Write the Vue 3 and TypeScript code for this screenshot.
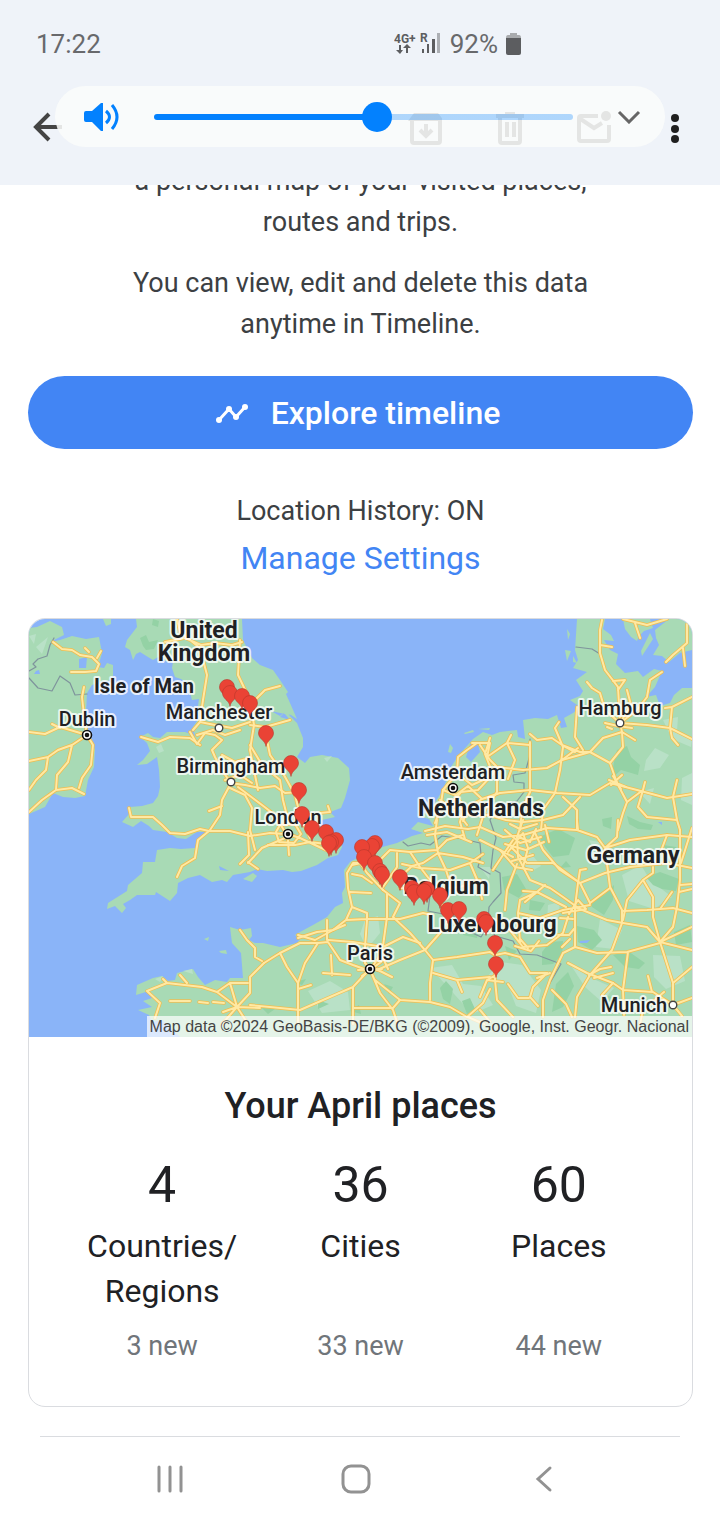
<script setup lang="ts">
import { computed, ref } from 'vue'

interface Stat { value: number; label: string; fresh: string }
interface City { name: string; x: number; y: number; kind?: 'country' | 'island' }

const volume = ref(53.5)
const trackStyle = computed(() => ({ '--level': `${volume.value}%` }))

const stats: Stat[] = [
  { value: 4, label: 'Countries/ Regions', fresh: '3 new' },
  { value: 36, label: 'Cities', fresh: '33 new' },
  { value: 60, label: 'Places', fresh: '44 new' },
]

const labels: City[] = [
  { name: 'United', x: 204, y: 638, kind: 'country' },
  { name: 'Kingdom', x: 204, y: 661, kind: 'country' },
  { name: 'Isle of Man', x: 144, y: 693, kind: 'island' },
  { name: 'Dublin', x: 87, y: 726 },
  { name: 'Manchester', x: 219, y: 719 },
  { name: 'Birmingham', x: 231, y: 773 },
  { name: 'London', x: 288, y: 824 },
  { name: 'Amsterdam', x: 453, y: 779 },
  { name: 'Netherlands', x: 481, y: 816, kind: 'country' },
  { name: 'Hamburg', x: 620, y: 715 },
  { name: 'Germany', x: 633, y: 863, kind: 'country' },
  { name: 'Belgium', x: 446, y: 894, kind: 'country' },
  { name: 'Luxembourg', x: 492, y: 932, kind: 'country' },
  { name: 'Paris', x: 370, y: 960 },
  { name: 'Munich', x: 634, y: 1012 },
]

const capitals = [[87, 735], [288, 834], [453, 788], [370, 969]]
const towns = [[219, 728], [231, 782], [620, 723], [673, 1005]]

const pins = [
  [227, 687], [230, 693], [242, 696], [250, 703], [266, 733], [291, 763], [299, 790],
  [302, 814], [312, 828], [326, 832], [336, 840], [331, 842], [329, 843], [375, 843],
  [372, 846], [362, 847], [364, 857], [375, 863], [380, 871], [382, 874], [400, 877],
  [412, 888], [414, 892], [427, 889], [424, 891], [440, 895], [448, 910], [459, 909],
  [484, 919], [486, 922], [495, 943], [496, 964],
]

const land = [
  'M29 628L37 627 50 621 62 627 64 635 50 642 60 640 72 636 86 639 99 637 102 653 98 667 104 668 107 663 113 665 113 676 108 681 100 682 92 685 87 693 86 712 87 727 95 750 94 767 88 780 85 796 75 798 63 797 53 793 45 807 29 814Z',
  'M103 619H111V624L106 626Z',
  'M136 619L137 627 127 640 125 647 130 650 133 660 136 654 140 652 148 657 153 660 160 656 165 661 173 662 172 668 175 677 181 679 187 683 190 692 192 700 199 699 197 713 199 718 193 727 195 736 185 732 167 732 160 738 153 737 148 733 140 737 147 743 150 751 143 760 137 765 147 764 157 757 159 770 160 787 158 796 153 803 142 806 130 807 130 813 122 822 133 827 141 821 149 826 153 830 167 832 177 838 186 839 197 832 206 832 200 838 195 848 181 849 170 848 157 850 155 862 143 862 142 873 128 885 127 891 108 903 107 909 115 906 122 913 126 908 123 904 130 900 137 895 155 895 156 892 170 901 177 893 178 883 188 878 200 875 212 882 222 880 227 882 233 875 250 872 257 869 267 871 283 870 292 872 301 871 317 865 328 858 338 855 342 847 340 838 328 834 319 825 322 820 335 817 330 812 341 808 345 798 350 780 349 768 338 758 322 755 310 757 305 763 297 757 303 747 303 738 297 723 288 714 283 713 291 715 297 719 290 703 286 694 288 692 280 680 273 670 260 665 252 658 243 640 242 619Z',
  'M243 879L253 873 257 876 252 882Z',
  'M180 1037L172 1029 162 1020 152 1022 149 1015 138 1010 152 1007 143 1001 152 998 149 991 136 995 137 985 153 978 162 976 168 981 175 980 177 973 193 969 198 977 205 985 215 980 227 982 230 978 243 978 241 953 232 943 230 927 240 930 251 928 252 936 249 940 255 943 263 943 280 947 297 943 300 939 295 935 300 932 313 925 327 917 335 907 343 903 342 893 345 887 344 870 350 862 361 856 375 849 397 843 412 836 423 833 411 829 418 822 433 826 429 819 419 816 430 810 443 790 451 767 458 756 467 746 473 739 483 732 492 735 500 732 517 730 518 737 525 739 523 720 535 718 548 719 557 715 561 728 567 727 564 718 573 713 580 707 570 700 580 696 583 691 576 680 587 672 573 668 578 660 575 650 577 619H605L603 629 611 635 614 641 604 640 610 650 618 654 616 664 625 673 638 671 643 677 654 669 662 671 655 687 646 697 656 695 660 706 670 703 674 695 682 688 692 688V1037Z',
  'M448 752L450 744 453 748 451 753Z',
  'M464 733L473 730 474 732 465 734ZM478 729L490 728 489 730Z',
  'M623 619H650L653 628 644 631 639 636 637 641 631 637 625 629ZM650 633L653 639 642 656 641 651ZM655 630L669 619H692V650L680 653 669 662 662 656 653 655 659 645 656 638Z',
  'M567 629L570 634 568 640ZM565 650L571 651 567 661ZM573 656L577 663 573 662Z',
  'M204 939L209 937 208 941ZM219 951L226 950 227 954 221 953Z',
]

const water = [
  'M79 659L87 657 86 668 79 668Z',
  'M36 671L39 670 40 674 34 674Z',
  'M470 744L478 744 480 752 471 762 466 757Z',
  'M219 866L229 871 220 870Z',
  'M271 711L280 716 285 712 280 717 290 720 285 714Z',
  'M658 822L662 822 662 825ZM580 941L590 940 587 943 580 943Z',
]

const forests = [
  'M140 638L146 635 149 642 158 640 154 649 146 650 143 646ZM153 619L159 621 158 627 152 625Z',
  'M617 750L627 746 631 757 640 765 638 775 621 770 611 779 614 762Z',
  'M627 816L640 822 653 825 651 830 638 829 629 824ZM602 819L612 817 611 829 603 826Z',
  'M539 837L558 829 575 838 569 855 553 857 546 848Z',
  'M646 877L660 872 679 879 676 891 662 889 653 885Z',
  'M590 901L605 894 614 885 613 900 604 915 592 907Z',
  'M577 926L594 930 602 940 592 950 578 942Z',
  'M542 952L550 942 563 941 562 955 553 964 542 965Z',
  'M556 984L568 972 574 986 563 1007 552 1012Z',
  'M613 955L628 951 645 963 639 969 625 967Z',
  'M502 877L517 874 526 889 519 898 504 890Z',
  'M674 932L690 925 692 942 676 945Z',
  'M465 922L480 925 477 938 463 935ZM505 946L517 951 509 960Z',
  'M440 988L446 981 453 989 450 1004 443 999ZM462 1001L470 998 475 1009 467 1014Z',
  'M350 1011L359 1005 361 1014ZM384 984L393 987 389 994ZM318 1000L329 1004 318 1009Z',
  'M294 982L306 979 302 985ZM262 1008L275 1009 268 1014ZM600 995L620 998 614 1010 601 1006Z',
  'M560 868L566 861 571 867ZM663 845L676 847 680 856 669 854ZM530 900L545 903 540 911 529 910Z',
]

const meadows = [
  'M365 920L378 916 380 933 367 949 360 934ZM308 991L330 981 348 992 350 1010 322 1013Z',
  'M430 968L452 965 463 984 481 986 493 1005 472 1014 446 985Z',
  'M500 962L522 965 541 990 536 1013 516 1006 507 983 488 976Z',
  'M622 875L641 865 650 880 672 897 654 909 629 901Z',
  'M600 919L622 930 614 949 596 947Z',
  'M570 964L589 977 614 988 602 1002 585 987ZM653 955L680 956 685 981 666 989 654 977Z',
  'M663 720L678 717 677 731 692 739 691 747 672 739ZM655 748L669 755 660 768 644 771 646 760Z',
  'M682 778L692 773V805L681 800ZM639 792L654 788 650 804ZM548 905L560 902 557 932 546 936Z',
  'M29 636L36 634 34 644ZM36 647L48 637 42 654ZM172 624L181 626 178 636ZM156 747L161 744 164 751 159 753Z',
  'M324 758L332 756 327 762ZM183 971L192 969 193 974ZM155 979L163 976 160 982Z',
  'M589 840L603 843 594 850ZM520 859L530 852 541 866 530 872ZM480 867L491 867 489 879Z',
]

const borders = [
  'M54 638L50 645 47 656 38 659 33 664 36 667 29 671',
  'M29 678L38 688 52 691 60 676 70 683 75 695 87 694',
  'M576 647L592 649 600 654',
  'M530 739L530 755 525 773 513 775 514 782 524 783 524 792 517 801 497 807 490 820 496 838 493 850 491 868 500 873 501 893 493 902 489 907 488 922 495 936 513 941 520 954 537 955 561 964 550 983 543 997 542 1016',
  'M403 842L408 846 421 843 430 845 442 836 463 839 480 843 481 855 478 867 490 874',
  'M430 895L428 911 443 914 451 913 466 930 481 937 489 925',
]

const roads = [
  'M53 642L62 649 72 650 80 655 92 657 99 664 96 671 85 672 71 672M101 651L97 658M85 648L89 652',
  'M84 687L82 697 84 715 87 735M29 732L45 734 60 727 87 735M52 724L60 728',
  'M87 735L72 745 58 750 48 757 29 761M87 735L93 745 91 765 82 778 79 788M72 745L68 762 57 775 56 790 72 788 84 794M48 757L46 770 36 780 29 790M56 790L42 800 29 812',
  'M141 737L158 742 170 737 190 738 200 745M165 642L185 638 201 645 215 643 232 645 242 642M177 619L180 632 200 648 207 675 203 700 200 722M240 640L238 675 250 700 254 725 250 750 258 790',
  'M193 730L200 722 215 725 232 728 250 722M190 732L197 744 205 733 215 735 222 740 212 750 215 757 222 770 230 782M197 735L213 730 225 735 240 730M250 725L265 727 290 720M255 700L265 690 280 686M266 735L270 755 284 775 295 795 300 815M250 745L262 765 280 780 283 800 288 820',
  'M222 755L235 762 250 758M230 785L222 800 220 815 210 830M222 806L209 811M230 788L245 795 252 808 250 830 255 850M230 783L245 785 260 788 275 786 285 793 299 792M238 787L262 805 275 815 285 832M225 780L240 775 252 783',
  'M129 808L131 817 153 817 162 825 170 833 185 834 200 829 209 831 230 831 250 836 270 833 285 834M209 831L198 840 195 858 182 866 177 877M248 832L249 855 240 864M248 863L262 848 285 838M248 862L258 869',
  'M288 834L300 838 315 845 330 852M288 840L289 855M268 845L295 845 310 842 326 844M302 820L310 838M320 813L330 812 328 806M276 832L280 825 295 824 301 834 294 843 279 842Z',
  'M240 930L247 940 255 948 255 957 262 961M264 963L250 977 250 993 237 1007M248 983L230 983 217 992 202 987 167 983 147 991 160 1003 155 1018M217 992L237 1007 230 983M260 1008L237 1007 223 1012M237 1007L222 1024M237 1007L248 1024M180 975L187 983M163 979L167 983M170 1001L190 1001M199 1002L208 1003M213 1002L224 1003',
  'M383 890L367 873 360 863 353 863 347 873 348 888 352 907 346 920 333 930 317 932 298 938M352 865L361 863M352 874L362 876 372 883M350 892L371 893M352 907L367 913 367 920 365 947 365 963 370 969M346 920L367 919 400 919 423 913 432 915',
  'M387 893L387 917 382 953 372 967M383 890L400 903 393 917 410 933 425 950 433 960 430 983 430 1000M264 963L280 953 300 943 318 943 328 942 340 960 353 965 367 970M298 935L315 940 333 930 345 925M327 920L327 940M280 953L287 967 298 983 298 1024M318 943L305 963 298 983M298 989L311 985',
  'M250 1005L270 1007 300 1010 323 1000 353 987 367 972M353 987L353 1024M372 974L380 993 393 1010 398 1025M375 980L400 1000 430 1002 450 1007 467 1017 483 1003 490 989M377 970L400 960 425 950 440 933 449 918',
  'M433 960L457 957 490 952 495 955 505 953 520 957 530 973 547 973M433 973L457 980 490 977M328 940L353 942 383 947 403 937 420 943M323 973L350 975M353 1008L393 1008 400 1000M331 955L332 975M383 958L388 969M376 969L392 977M457 980L462 992M358 970L382 969M362 976L381 962',
  'M380 860L390 850 410 852 437 850 447 840 463 835M397 853L397 867 383 887M400 877L412 866 423 863 438 853 463 857 483 863M410 852L420 867 430 880 437 897 450 917M400 888L418 889 440 889 460 887 480 880M402 864L420 868 450 870 470 863 483 854M437 820L435 835 438 853 446 870 452 889M470 863L478 882 482 899',
  'M477 743L467 750 458 757 457 773 443 790 440 810 435 823M472 743L490 743 487 757 507 743 530 745M480 745L490 760 497 767 523 770 547 768 562 760 590 752 610 763 617 783 627 802 623 813 618 830M490 738L485 754 493 774 478 790 461 792 450 805M457 773L472 785 490 777 497 767M497 767L497 792 485 810 477 835M511 735L507 743 515 760 508 779',
  'M443 790L456 795 468 786 482 799 500 793 530 790 557 793 590 795 610 783 637 790 667 798 692 794M440 809L457 806 470 815 489 815 506 820 523 822 543 820 563 815 580 797M440 800L457 812 467 825M455 795L464 806 460 822 465 839M425 831L445 826 468 829 480 827M427 835L447 832 471 842M482 799L470 806 463 821',
  'M530 734L537 740 552 738 562 745 580 752 590 752 603 738 622 732 635 740M559 722L555 728 563 747 560 770 555 793 543 810 541 830M577 707L575 737 583 750M562 745L575 752M562 760L578 748M622 732L623 747 610 763M530 742L530 770 530 792 522 810 520 830',
  'M602 620L600 630 600 653 605 670 618 687 620 723M613 681L625 680 618 690M600 645L612 647M587 682L592 688 600 693 605 710 620 723M627 690L631 705 620 723M662 672L650 680 647 697 637 710 620 723 622 732M605 723L618 726 632 728M620 723L647 725 670 728 692 739M670 728L672 707 692 697M665 708L672 707M670 728L672 738 678 745M607 727L612 729',
  'M623 619L647 625 667 619M635 623L640 638M687 624L687 643 673 655 666 662M683 648L685 666M563 797L577 810 577 830M645 782L643 790 638 807 647 817 677 820 673 797 677 780M677 820L680 830M643 790L627 802M611 785L622 775M613 776L621 789M609 780L626 787',
  'M480 827L503 837 523 835 547 828 577 830 597 837 605 848 630 840 667 835 692 837M618 820L617 837 605 848M577 820L578 830M523 820L517 837 518 857 530 880 550 888 563 897 577 907M480 840L500 850 513 857M493 870L513 840M528 863L553 863 580 883 590 903M535 833L543 850 560 870 580 883',
  'M505 830L520 843 541 837M505 844L526 850 544 842M508 852L523 833 528 848 523 867M512 861L533 855M517 836L530 842 536 829M545 825L549 842M510 824L520 829 537 824M500 850L515 867 532 870M511 847L527 863',
  'M580 870L578 883 575 907M580 870L586 869M580 883L605 873 630 867 667 863 692 868M605 848L610 887 622 910 622 923 612 950 590 975 577 997 575 1017M590 903L610 888M575 907L607 920 623 923 647 927 660 942 673 983 673 1005M692 927L660 942 692 950M622 911L647 910 673 908 692 913',
  'M653 867L653 873 643 880 653 897 653 917 660 942M643 880L627 900 623 920M680 830L680 863 680 880 677 907 673 927 660 942M667 835L658 859M692 828L681 863M679 892L692 889M680 885L692 884M660 909L672 892',
  'M575 907L575 947 563 953 550 980 543 1000 543 1017M575 947L597 953 627 952 660 943M568 963L587 973 613 983 623 990 653 992 673 1005 692 998M628 952L623 990 624 1015M673 983L692 967M673 1005L682 1016M664 992L650 1004M589 975L600 969 611 967M594 978L613 973M648 976L652 992',
  'M502 920L523 947 547 945 563 933 568 917M518 913L540 918 563 910 590 905M518 913L520 943M537 892L520 900 518 913M537 892L566 907M505 910L507 890 517 864M515 946L531 951 539 941M520 939L528 948M563 913L586 909 578 900 569 914M558 935L569 935 574 929M562 947L570 939M560 918L573 919M523 891L537 892 545 885M525 902L537 892',
  'M495 980L497 1000 513 1017M487 980L503 982M495 955L495 980M480 997L487 980 494 976M508 984L518 998 529 998M552 990L566 1004 572 1017M547 973L533 987 530 997 538 1006M537 978L550 973M480 1010L490 1022M613 983L602 995M468 1017L484 1024M643 1010L640 1024',
]
</script>

<template>
  <div class="screen">
    <header class="top">
      <div class="status">
        <time>17:22</time>
        <div class="indicators">
          <svg class="signal" viewBox="0 0 48 28" aria-label="4G+ roaming signal">
            <g fill="#5c5d60">
              <text x="0" y="13">4G+</text>
              <text x="26" y="12">R</text>
              <path d="M5 15H7V20H9L6 24 2 20H5ZM14 23H12V18H9L13 14 17 18H14Z" />
              <path d="M28 19H30V23H28ZM33 14H35V23H33ZM38 9H41V23H38Z" />
              <path d="M43 3H46V23H43Z" opacity=".45" />
            </g>
          </svg>
          <span>92%</span>
          <svg class="battery" viewBox="0 0 15 22" aria-hidden="true">
            <path fill="#a9abae" d="M4 0H11V2H13Q15 2 15 5H0Q0 2 2 2H4Z" />
            <path fill="#5c5d60" d="M0 5H15V20Q15 22 13 22H2Q0 22 0 20Z" />
          </svg>
        </div>
      </div>
      <div class="toolbar">
        <button class="back" type="button" aria-label="Back">
          <svg viewBox="0 0 48 48"><path d="M42 23H17M29 10L16 23 29 36" /></svg>
        </button>
        <button type="button" aria-label="Archive">
          <svg viewBox="0 0 48 48"><path d="M10 15V37Q10 39 12 39H36Q38 39 38 37V15L35 11H13L10 15H38M24 20V31M18 26L24 32 30 26" /></svg>
        </button>
        <button type="button" aria-label="Delete">
          <svg viewBox="0 0 48 48"><path d="M10 12H38M19 10H29M14 13V37Q14 39 16 39H32Q34 39 34 37V13M21 18V33M28 18V33" /></svg>
        </button>
        <button type="button" aria-label="Mark as unread">
          <svg viewBox="0 0 48 48">
            <path d="M28 12H11Q9 12 9 14V35Q9 37 11 37H37Q39 37 39 35V21M9 14L24 24 32 19" />
            <circle class="solid" cx="36" cy="12" r="5" />
          </svg>
        </button>
        <button type="button" aria-label="More options">
          <svg viewBox="0 0 48 48"><g class="dots"><circle cx="21" cy="14" r="4" /><circle cx="21" cy="25" r="4" /><circle cx="21" cy="35" r="4" /></g></svg>
        </button>
      </div>
      <div class="volume">
        <svg class="speaker" viewBox="0 0 36 30" aria-hidden="true">
          <path fill="#0381fe" d="M2 9H8L17 1H19V29H17L8 20H2Q0 20 0 18V11Q0 9 2 9Z" />
          <path fill="none" stroke="#0381fe" stroke-width="3" d="M22 9Q29 15 22 21M28 3Q38 15 28 27" />
        </svg>
        <input v-model.number="volume" :style="trackStyle" type="range" min="0" max="100" step="0.5" aria-label="Media volume">
        <button type="button" aria-label="Expand volume panel">
          <svg viewBox="0 0 24 14"><path d="M2 2L12 12 22 2" /></svg>
        </button>
      </div>
    </header>

    <main>
      <p class="intro">a personal map of your visited places,<br>routes and trips.</p>
      <p class="intro note">You can view, edit and delete this data<br>anytime in Timeline.</p>
      <button class="explore" type="button">
        <svg viewBox="0 0 34 22" aria-hidden="true">
          <path fill="none" stroke="#fff" stroke-width="3" d="M4 18L14 7 21 15 30 5" />
          <g fill="#fff"><circle cx="4" cy="18" r="3" /><circle cx="14" cy="7" r="3" /><circle cx="21" cy="15" r="3" /><circle cx="30" cy="5" r="3" /></g>
        </svg>
        Explore timeline
      </button>
      <p class="history">Location History: ON</p>
      <a class="manage" href="#settings">Manage Settings</a>

      <section class="card">
        <div class="map">
          <svg viewBox="29 619 663 418" role="img" aria-label="Map of visited places">
            <path fill="#8ab4f8" d="M29 619H692V1037H29Z" />
            <path v-for="d in land" :key="d" :d="d" fill="#a8dab5" />
            <path v-for="d in meadows" :key="d" :d="d" fill="#b9e1c7" />
            <path v-for="d in forests" :key="d" :d="d" fill="#94d2a5" />
            <path v-for="d in water" :key="d" :d="d" fill="#8ab4f8" />
            <g class="border"><path v-for="d in borders" :key="d" :d="d" /></g>
            <g class="casing"><path v-for="d in roads" :key="d" :d="d" /></g>
            <g class="road"><path v-for="d in roads" :key="d" :d="d" /></g>
            <g v-for="[x, y] in capitals" :key="`${x}-${y}`">
              <circle :cx="x" :cy="y" r="4.5" fill="#fff" stroke="#111" stroke-width="1.6" />
              <circle :cx="x" :cy="y" r="2.3" fill="#111" />
            </g>
            <circle v-for="[x, y] in towns" :key="`${x}-${y}`" :cx="x" :cy="y" r="3.8" fill="#fff" stroke="#444" stroke-width="1.4" />
            <text v-for="l in labels" :key="l.name" :x="l.x" :y="l.y" :class="l.kind">{{ l.name }}</text>
            <g fill="#ea4335" stroke="#b9382b" stroke-width=".6">
              <path v-for="[x, y] in pins" :key="`${x}-${y}`" :d="`M${x} ${y + 13}C${x - 1} ${y + 7} ${x - 7.5} ${y + 6} ${x - 7.5} ${y}A7.5 7.5 0 0 1 ${x + 7.5} ${y}C${x + 7.5} ${y + 6} ${x + 1} ${y + 7} ${x} ${y + 13}Z`" />
            </g>
          </svg>
          <small>Map data ©2024 GeoBasis-DE/BKG (©2009), Google, Inst. Geogr. Nacional</small>
        </div>
        <h2>Your April places</h2>
        <div class="stats">
          <div v-for="s in stats" :key="s.label" class="stat">
            <strong>{{ s.value }}</strong>
            <span class="label">{{ s.label }}</span>
            <span class="fresh">{{ s.fresh }}</span>
          </div>
        </div>
      </section>
    </main>

    <nav>
      <button type="button" aria-label="Recent apps">
        <svg viewBox="0 0 36 36"><path d="M8 6V30M19 6V30M30 6V30" /></svg>
      </button>
      <button type="button" aria-label="Home">
        <svg viewBox="0 0 36 36"><rect x="5" y="5" width="26" height="26" rx="8" /></svg>
      </button>
      <button type="button" aria-label="Back">
        <svg viewBox="0 0 36 36"><path d="M24 7L12 18 24 29" /></svg>
      </button>
    </nav>
  </div>
</template>

<style>
body { margin: 0; background: #fff; }
</style>

<style scoped>
.screen {
  min-height: 100vh;
  display: flex;
  flex-direction: column;
  font-family: Roboto, "Liberation Sans", sans-serif;
  color: #3c4043;
  background: #fff;
}
button {
  padding: 0;
  border: 0;
  background: none;
  font-family: inherit;
  cursor: pointer;
}
svg { display: block; }
.top {
  position: relative;
  z-index: 1;
  padding-bottom: 17px;
  background: #eff3f9;
}
.status {
  height: 88px;
  padding: 0 199px 0 36px;
  display: flex;
  align-items: center;
  justify-content: space-between;
  font-size: 26px;
  color: #68696c;
}
.indicators { display: flex; align-items: center; gap: 8px; }
.signal { width: 48px; height: 28px; }
.signal text { font-size: 12px; font-weight: 700; }
.battery { width: 15px; height: 22px; }
.toolbar {
  height: 80px;
  padding: 0 18px 0 20px;
  display: flex;
  align-items: center;
  gap: 36px;
}
.toolbar button { width: 48px; height: 48px; }
.toolbar .back { margin-right: auto; }
.toolbar svg { width: 48px; height: 48px; fill: none; stroke: #444; stroke-width: 4; }
.toolbar .solid { fill: #444; stroke: none; }
.toolbar .dots { fill: #1f1f1f; stroke: none; }
.volume {
  position: absolute;
  top: 86px;
  left: 55px;
  right: 55px;
  height: 61px;
  box-sizing: border-box;
  padding: 0 24px 0 29px;
  display: flex;
  align-items: center;
  border-radius: 31px;
  background: rgba(250, 252, 250, .88);
}
.speaker { width: 36px; height: 30px; flex: none; }
.volume input {
  flex: 1;
  min-width: 0;
  height: 30px;
  margin: 0 44px 0 34px;
  appearance: none;
  background: none;
}
.volume input::-webkit-slider-runnable-track {
  height: 6px;
  border-radius: 3px;
  background: linear-gradient(to right, #0381fe var(--level), rgba(3, 129, 254, .3) var(--level));
}
.volume input::-webkit-slider-thumb {
  appearance: none;
  width: 30px;
  height: 30px;
  margin-top: -12px;
  border-radius: 50%;
  background: #0381fe;
}
.volume button svg { width: 24px; height: 14px; fill: none; stroke: #666; stroke-width: 3; }
main {
  padding: 0 27px 0 28px;
  display: flex;
  flex-direction: column;
  align-items: center;
  text-align: center;
}
.intro { margin: -24px 0 0; font-size: 27px; line-height: 41px; }
.note { margin-top: 20px; }
.explore {
  width: 100%;
  height: 73px;
  margin-top: 31px;
  padding-right: 6px;
  display: flex;
  align-items: center;
  justify-content: center;
  gap: 22px;
  border-radius: 37px;
  background: #4285f4;
  color: #fff;
  font-size: 32px;
  font-weight: 500;
}
.explore svg { width: 34px; height: 22px; }
.history { margin: 42px 0 0; font-size: 27px; line-height: 41px; }
.manage { margin-top: 2px; font-size: 32px; line-height: 48px; color: #4285f4; text-decoration: none; }
.card {
  width: 100%;
  box-sizing: border-box;
  margin-top: 36px;
  overflow: hidden;
  border: 1px solid #dadce0;
  border-radius: 17px;
  color: #202124;
}
.map { position: relative; }
.map svg { width: 100%; }
.map path { stroke-linejoin: round; stroke-linecap: round; }
.border { fill: none; stroke: #7f949c; stroke-width: 1.2; }
.casing { fill: none; stroke: #efbd50; stroke-width: 3.5; }
.road { fill: none; stroke: #ffe9a3; stroke-width: 2; }
.map text {
  font-size: 20px;
  font-weight: 500;
  fill: #202124;
  text-anchor: middle;
  paint-order: stroke;
  stroke: rgba(255, 255, 255, .8);
  stroke-width: 4px;
  stroke-linejoin: round;
}
.map .country { font-size: 23px; font-weight: 700; }
.map .island { font-weight: 700; }
.map small {
  position: absolute;
  right: 0;
  bottom: 0;
  padding: 0 3px;
  background: rgba(255, 255, 255, .7);
  font: 16px/21px "Liberation Sans", Arial, sans-serif;
  color: #444;
  white-space: nowrap;
}
h2 { margin: 45px 0 0; font-size: 36px; line-height: 48px; font-weight: 500; }
.stats {
  padding: 25px 34px 44px;
  display: grid;
  grid-template-columns: repeat(3, 1fr);
}
.stat { display: flex; flex-direction: column; align-items: center; }
.stat strong { font-size: 50px; line-height: 60px; font-weight: 400; }
.label { margin-top: 9px; font-size: 32px; line-height: 45px; }
.fresh { margin-top: auto; padding-top: 16px; font-size: 27px; line-height: 32px; color: #70757a; }
nav {
  margin: 29px 40px 0;
  padding: 0 42px 0 35px;
  flex: 1;
  display: flex;
  align-items: center;
  justify-content: space-around;
  border-top: 1px solid #dadce0;
}
nav button { width: 36px; height: 36px; }
nav svg { width: 36px; height: 36px; fill: none; stroke: #929292; stroke-width: 3; stroke-linecap: round; }
</style>
